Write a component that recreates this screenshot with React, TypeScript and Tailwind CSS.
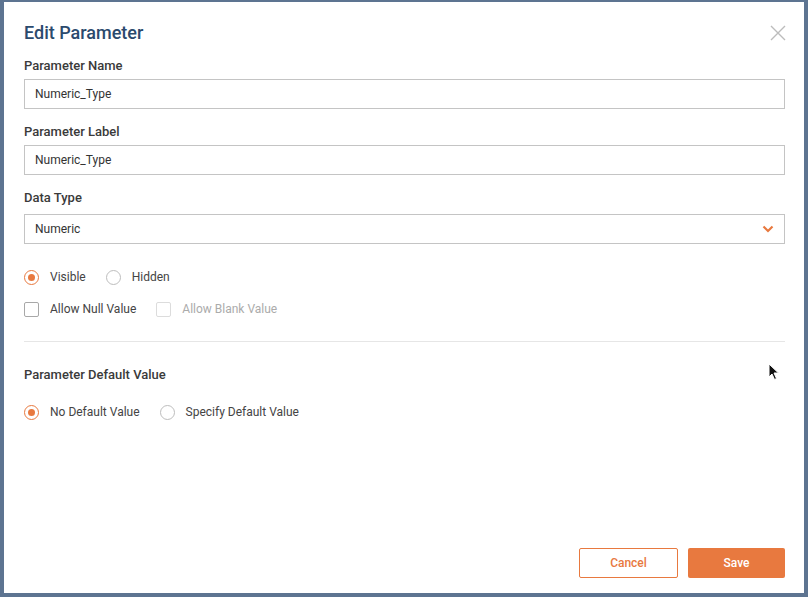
import { useState } from "react";

const font = { fontFamily: "Roboto, 'Liberation Sans', sans-serif" };

function Radio({ checked, label }: { checked: boolean; label: string }) {
  return (
    <label className="flex items-center gap-[11px] text-[12px] text-[#444]">
      <span
        className={
          checked
            ? "flex h-[15px] w-[15px] items-center justify-center rounded-full border border-[#e8793f]"
            : "h-[15px] w-[15px] rounded-full border border-[#bdbdbd]"
        }
      >
        {checked && <span className="h-[7px] w-[7px] rounded-full bg-[#e8793f]"></span>}
      </span>
      {label}
    </label>
  );
}

function Checkbox({ label, disabled }: { label: string; disabled?: boolean }) {
  return (
    <label
      className={
        disabled
          ? "flex items-center gap-[11px] text-[12px] text-[#ababab]"
          : "flex items-center gap-[11px] text-[12px] text-[#444]"
      }
    >
      <span
        className={
          disabled
            ? "h-[15px] w-[15px] rounded-[2px] border border-[#dcdcdc]"
            : "h-[15px] w-[15px] rounded-[2px] border border-[#a8a8a8]"
        }
      ></span>
      {label}
    </label>
  );
}

function Field({ label, value }: { label: string; value: string }) {
  return (
    <div className="flex flex-col">
      <div className="text-[13px] font-medium leading-4 text-[#3a3a3a]">{label}</div>
      <div className="mt-[5px] flex h-[30px] items-center border border-[#c4c4c4] px-[10px] text-[12px] text-[#333]">
        {value}
      </div>
    </div>
  );
}

export default function App() {
  const [dataType] = useState("Numeric");

  return (
    <div
      className="relative h-[597px] w-[808px] overflow-hidden bg-[#5d7491] pl-[4px] pt-[2px]"
      style={font}
    >
      <div className="flex h-[591px] w-[800px] flex-col bg-white pb-[15px] pl-5 pr-[19px] pt-[19px]">
        <div className="flex items-center justify-between">
          <h1 className="text-[18px] font-medium leading-6 text-[#2b4a6d]">Edit Parameter</h1>
          <svg width="16" height="16" viewBox="0 0 16 16" className="mr-[-1px]">
            <path d="M1 1 L15 15 M15 1 L1 15" stroke="#bcbcbc" strokeWidth="1.4" />
          </svg>
        </div>

        <div className="mt-[13px] flex flex-col gap-[15px]">
          <Field label="Parameter Name" value="Numeric_Type" />
          <Field label="Parameter Label" value="Numeric_Type" />
          <div className="flex flex-col">
            <div className="text-[13px] font-medium leading-4 text-[#3a3a3a]">Data Type</div>
            <div className="mt-[8px] flex h-[30px] items-center justify-between border border-[#c4c4c4] pl-[10px] pr-[10px] text-[12px] text-[#333]">
              {dataType}
              <svg width="12" height="8" viewBox="0 0 12 8">
                <path d="M1.5 1.5 L6 6 L10.5 1.5" fill="none" stroke="#e8793f" strokeWidth="2.2" />
              </svg>
            </div>
          </div>
        </div>

        <div className="mt-[24px] flex items-center gap-[20px]">
          <Radio checked label="Visible" />
          <Radio checked={false} label="Hidden" />
        </div>
        <div className="mt-[14px] flex items-center gap-[20px]">
          <Checkbox label="Allow Null Value" />
          <Checkbox label="Allow Blank Value" disabled />
        </div>

        <div className="mt-[23px] h-px bg-[#e6e6e6]"></div>

        <div className="mt-[25px] text-[13px] font-medium leading-4 text-[#3a3a3a]">
          Parameter Default Value
        </div>
        <div className="mt-[20px] flex items-center gap-[20px]">
          <Radio checked label="No Default Value" />
          <Radio checked={false} label="Specify Default Value" />
        </div>

        <div className="mt-auto flex justify-end gap-[10px]">
          <button className="h-[30px] w-[99px] rounded-[2px] border border-[#e8793f] bg-white text-[12px] font-medium text-[#e8793f]">
            Cancel
          </button>
          <button className="h-[30px] w-[97px] rounded-[2px] bg-[#e8793f] text-[12px] font-medium text-white">
            Save
          </button>
        </div>
      </div>

      <svg
        className="absolute left-[768px] top-[363px]"
        width="12"
        height="18"
        viewBox="0 0 12 18"
      >
        <path d="M1 1 L1 14 L4 11 L6.5 16.5 L8.5 15.5 L6 10 L10.5 10 Z" fill="#111" stroke="#fff" strokeWidth="1" />
      </svg>
    </div>
  );
}
